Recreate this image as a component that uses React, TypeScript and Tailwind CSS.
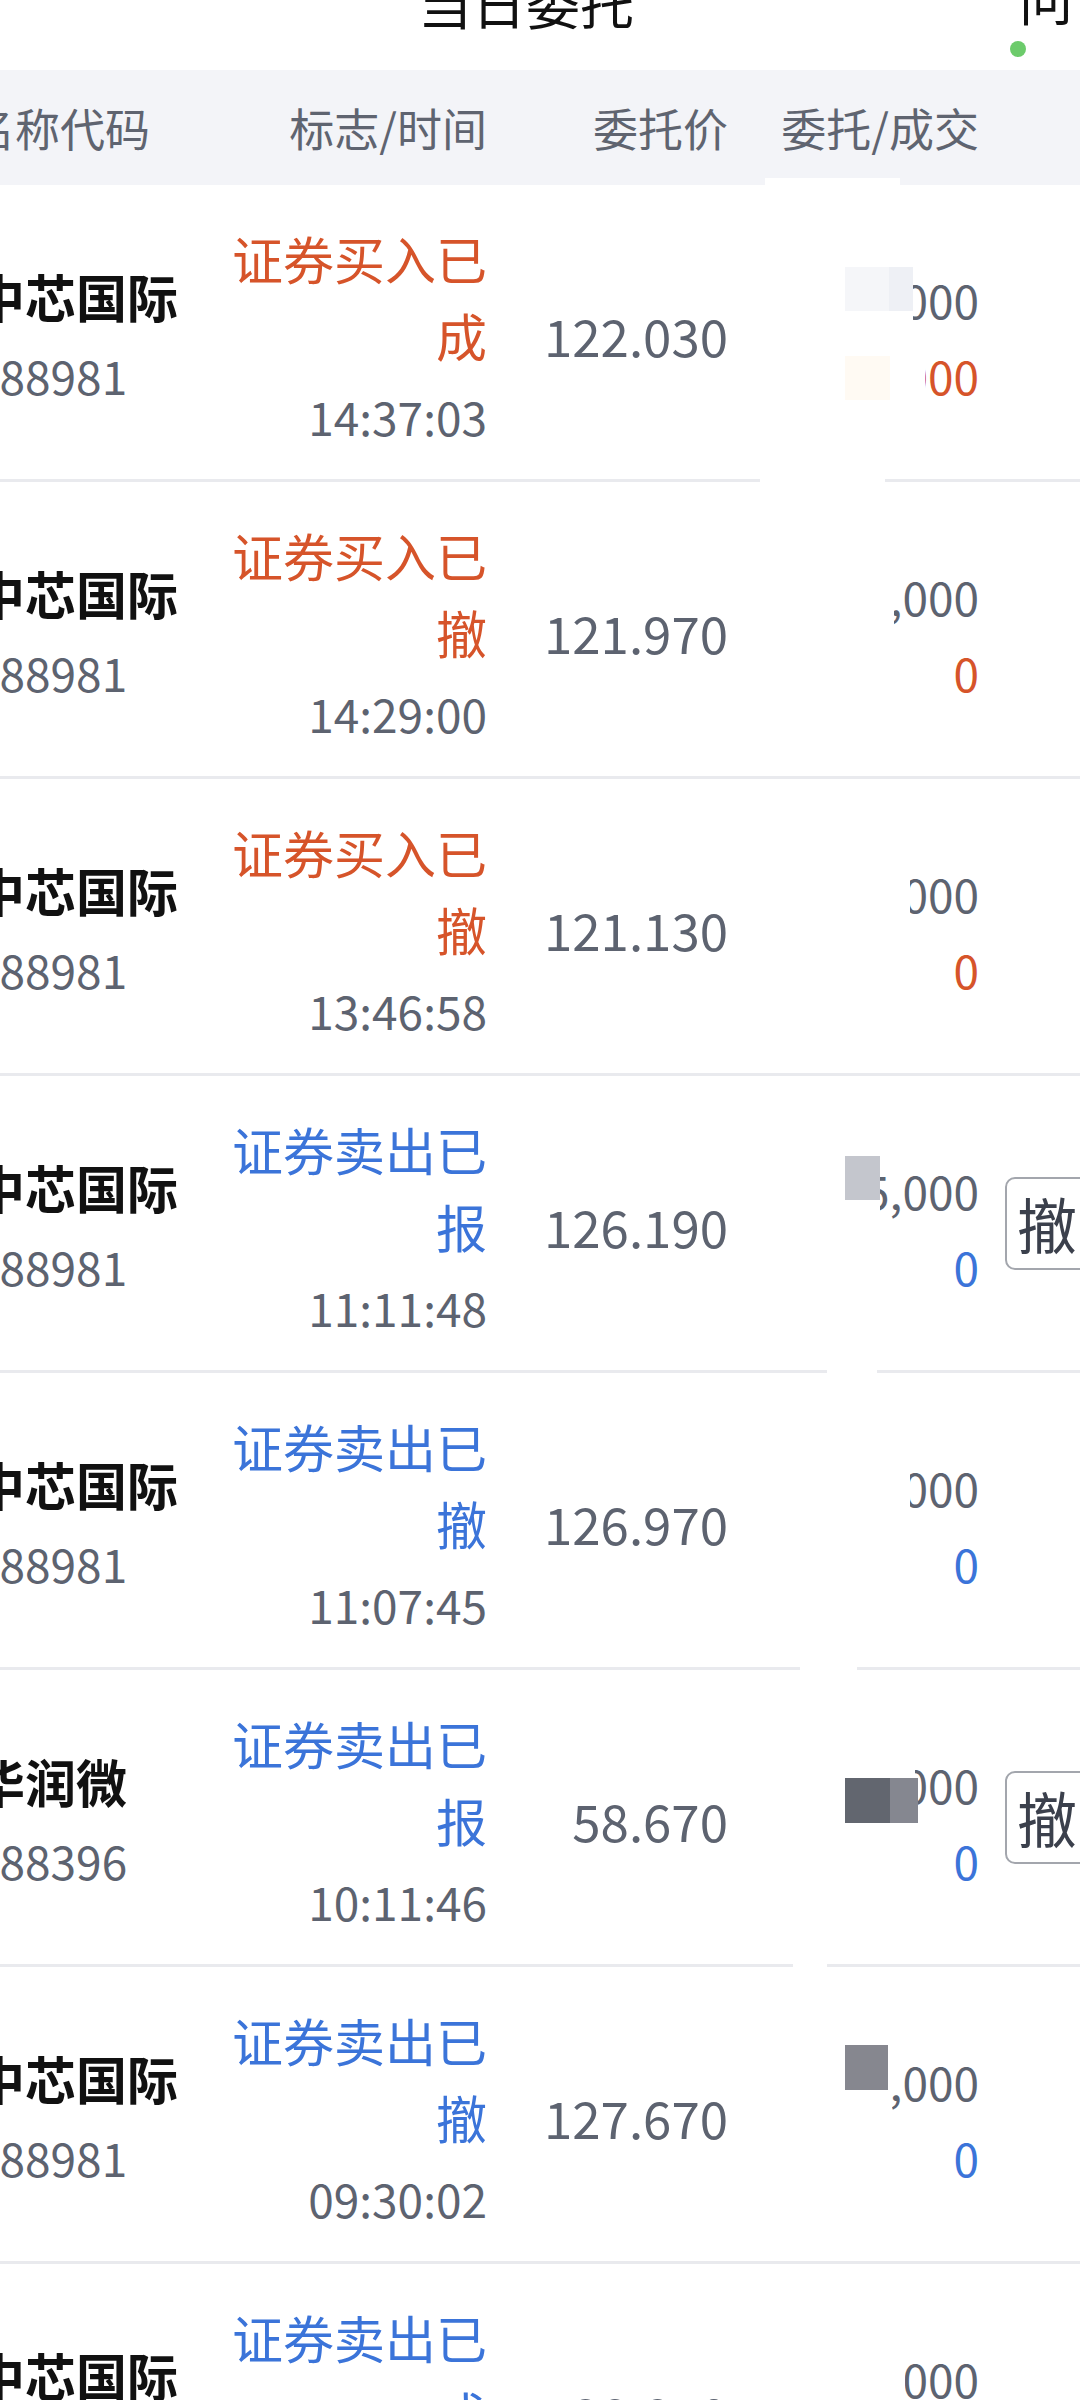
type Patch = { x: number; y: number; w: number; h: number; c: string };

type Order = {
  name: string;
  code: string;
  side: "buy" | "sell";
  status: string;
  time: string;
  price: string;
  qty: string;
  filled: string;
  cancel?: boolean;
  patches: Patch[];
  gap?: [number, number];
};

// white mask over the first line of 委托/成交, then the coloured blocks on top
const mask1 = (end: number): Patch => ({ x: 845, y: 84, w: end - 845, h: 64, c: "#ffffff" });

const orders: Order[] = [
  {
    name: "中芯国际",
    code: "688981",
    side: "buy",
    status: "证券买入已成",
    time: "14:37:03",
    price: "122.030",
    qty: "1,000",
    filled: "1,000",
    patches: [
      mask1(913),
      { x: 845, y: 82, w: 44, h: 44, c: "#f5f6f9" },
      { x: 889, y: 82, w: 24, h: 44, c: "#eef0f5" },
      { x: 845, y: 160, w: 80, h: 64, c: "#ffffff" },
      { x: 845, y: 171, w: 45, h: 44, c: "#fffaf3" },
    ],
    gap: [760, 885],
  },
  {
    name: "中芯国际",
    code: "688981",
    side: "buy",
    status: "证券买入已撤",
    time: "14:29:00",
    price: "121.970",
    qty: "1,000",
    filled: "0",
    patches: [mask1(894)],
  },
  {
    name: "中芯国际",
    code: "688981",
    side: "buy",
    status: "证券买入已撤",
    time: "13:46:58",
    price: "121.130",
    qty: "1,000",
    filled: "0",
    patches: [mask1(910)],
  },
  {
    name: "中芯国际",
    code: "688981",
    side: "sell",
    status: "证券卖出已报",
    time: "11:11:48",
    price: "126.190",
    qty: "5,000",
    filled: "0",
    cancel: true,
    patches: [mask1(880), { x: 845, y: 80, w: 35, h: 44, c: "#c4c6cd" }],
    gap: [827, 877],
  },
  {
    name: "中芯国际",
    code: "688981",
    side: "sell",
    status: "证券卖出已撤",
    time: "11:07:45",
    price: "126.970",
    qty: "1,000",
    filled: "0",
    patches: [mask1(910)],
    gap: [800, 857],
  },
  {
    name: "华润微",
    code: "688396",
    side: "sell",
    status: "证券卖出已报",
    time: "10:11:46",
    price: "58.670",
    qty: "1,000",
    filled: "0",
    cancel: true,
    patches: [
      mask1(915),
      { x: 845, y: 108, w: 45, h: 45, c: "#62666f" },
      { x: 890, y: 108, w: 28, h: 45, c: "#858790" },
    ],
    gap: [793, 827],
  },
  {
    name: "中芯国际",
    code: "688981",
    side: "sell",
    status: "证券卖出已撤",
    time: "09:30:02",
    price: "127.670",
    qty: "1,000",
    filled: "0",
    patches: [mask1(892), { x: 845, y: 78, w: 43, h: 45, c: "#86878f" }],
  },
  {
    name: "中芯国际",
    code: "688981",
    side: "sell",
    status: "证券卖出已成",
    time: "09:25:14",
    price: "128.870",
    qty: "1,000",
    filled: "1,000",
    patches: [mask1(905)],
  },
];

function OrderRow({ o }: { o: Order }) {
  const tone = o.side === "buy" ? "text-[#d6542a]" : "text-[#3b74d9]";
  return (
    <div className="relative flex h-[297px] items-center border-b-[3px] border-[#e9eaee]">
      <div className="ml-[-26px] w-[246px] shrink-0 pt-[7px]">
        <div className="whitespace-nowrap text-[51px] font-bold leading-[79px] text-[#111111]">{o.name}</div>
        <div className="text-[46px] leading-[79px] text-[#5d6370]">{o.code}</div>
      </div>
      <div className="w-[267px] shrink-0 pt-[10px] text-right">
        <div className={`text-[51px] leading-[77px] ${tone}`}>{o.status}</div>
        <div className="mt-[4px] text-[46px] leading-[77px] text-[#5d6370]">{o.time}</div>
      </div>
      <div className="w-[241px] shrink-0 pt-[6px] text-right text-[51px] leading-[77px] text-[#5d6370]">
        {o.price}
      </div>
      <div className="w-[251px] shrink-0 pt-[10px] text-right text-[46px] leading-[76px]">
        <div className="text-[#5d6370]">{o.qty}</div>
        <div className={tone}>{o.filled}</div>
      </div>
      {o.cancel && (
        <button className="ml-[26px] flex h-[93px] shrink-0 items-center whitespace-nowrap rounded-[10px] border-2 border-[#a3a6ad] px-[10px] text-[60px] leading-none text-[#3b404c]">
          撤单
        </button>
      )}
      {o.patches.map((p, i) => (
        <div
          key={i}
          className="absolute"
          style={{ left: p.x, top: p.y, width: p.w, height: p.h, background: p.c }}
        />
      ))}
      {o.gap && (
        <div
          className="absolute bottom-[-3px] h-[3px] bg-white"
          style={{ left: o.gap[0], width: o.gap[1] - o.gap[0] }}
        />
      )}
    </div>
  );
}

export default function App() {
  return (
    <div className="relative h-[2400px] w-[1080px] overflow-hidden bg-white font-['Noto_Sans_CJK_SC',sans-serif]">
      <div className="relative flex h-[70px] items-start">
        <div className="ml-[418px] mt-[-25px] w-[216px] whitespace-nowrap text-[54px] leading-[54px] text-[#111111]">
          当日委托
        </div>
        <div className="ml-[385px] mt-[-29px] whitespace-nowrap text-[54px] leading-[54px] text-[#111111]">
          问
        </div>
        <span className="absolute left-[1010px] top-[41px] h-[16px] w-[16px] rounded-full bg-[#6ccb6b]" />
      </div>
      <div className="relative flex h-[115px] items-center bg-[#f3f4f8] text-[45px] leading-[60px] text-[#5f6470]">
        <div className="ml-[-30px] w-[250px] shrink-0 whitespace-nowrap">名称代码</div>
        <div className="w-[267px] shrink-0 text-right">标志/时间</div>
        <div className="w-[241px] shrink-0 text-right">委托价</div>
        <div className="w-[251px] shrink-0 text-right">委托/成交</div>
        <div className="absolute left-[765px] top-[108px] h-[7px] w-[135px] bg-white" />
      </div>
      {orders.map((o, i) => (
        <OrderRow key={i} o={o} />
      ))}
    </div>
  );
}
